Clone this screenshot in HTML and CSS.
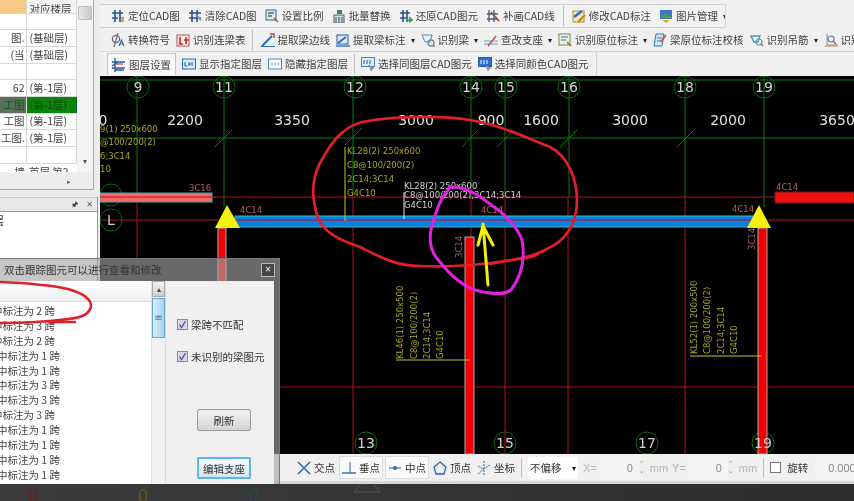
FILE: index.html
```html
<!DOCTYPE html>
<html lang="zh">
<head>
<meta charset="utf-8">
<title>CAD识别</title>
<link rel="stylesheet" href="styles.css">
</head>
<body>
<svg class="defs" width="0" height="0">
  <symbol id="i-locate" viewBox="0 0 14 14"><path d="M4 1v12M9 1v12M1 4h11M1 9h6" stroke="#26508c" stroke-width="1.6" fill="none"/><path d="M10 8h3v5h-3z" fill="#e0a820"/></symbol>
  <symbol id="i-clear" viewBox="0 0 14 14"><path d="M4 1v12M9 1v12M1 4h12M1 9h12" stroke="#26508c" stroke-width="1.6" fill="none"/><path d="M8 6l5 5" stroke="#7a90b0" stroke-width="2"/></symbol>
  <symbol id="i-scale" viewBox="0 0 14 14"><rect x="1" y="1" width="10" height="10" fill="#dfe8f2" stroke="#33668c"/><path d="M3 4h6M3 7h4" stroke="#3c7a44" stroke-width="1.5"/><path d="M9 9l4 4" stroke="#b04030" stroke-width="1.5"/></symbol>
  <symbol id="i-batch" viewBox="0 0 14 14"><rect x="2" y="6" width="10" height="8" fill="#cfe0d8" stroke="#557"/><path d="M4 8v5M7 8v5M10 8v5" stroke="#447"/><path d="M5 1h5v4H5z" fill="#2c8a50"/></symbol>
  <symbol id="i-restore" viewBox="0 0 14 14"><path d="M4 1v12M8 1v12M1 4h10M1 9h6" stroke="#26508c" stroke-width="1.6" fill="none"/><path d="M7 11h6M10 8l3 3-3 2" stroke="#2c9a40" stroke-width="1.6" fill="none"/></symbol>
  <symbol id="i-draw" viewBox="0 0 14 14"><path d="M3 1v12M8 1v12M1 5h11M1 10h11" stroke="#46608c" stroke-width="1.4" fill="none"/><path d="M5 3l8 9" stroke="#a04a30" stroke-width="1.6"/></symbol>
  <symbol id="i-edit" viewBox="0 0 14 14"><rect x="1" y="2" width="11" height="11" fill="#f4e8b8" stroke="#b09030"/><path d="M2 8l8-6" stroke="#2a70c0" stroke-width="2.4"/><path d="M6 13l7-7" stroke="#d08020" stroke-width="2"/></symbol>
  <symbol id="i-pic" viewBox="0 0 14 14"><rect x="1" y="1" width="12" height="9" fill="#3a7ac8"/><path d="M2 9l4-5 3 3 2-1 2 3z" fill="#5aa040"/><path d="M3 11h8l-4 3z" fill="#e0b020"/></symbol>
  <symbol id="i-phi" viewBox="0 0 14 14"><path d="M7 0L3 14" stroke="#667" stroke-width="1.2"/><ellipse cx="5" cy="6" rx="3.6" ry="3.6" fill="none" stroke="#667" stroke-width="1.2"/><path d="M8 13l2.500-6 2.500 6M9 11h3" stroke="#2a6ac0" stroke-width="1.2" fill="none"/></symbol>
  <symbol id="i-lian" viewBox="0 0 14 14"><rect x="1" y="2" width="12" height="11" fill="#fbeee8" stroke="#c0504a"/><path d="M4 4v7h3M10 4v7M8 7h5" stroke="#c02a2a" stroke-width="1.6" fill="none"/></symbol>
  <symbol id="i-edge" viewBox="0 0 14 14"><path d="M1 13L11 3" stroke="#2a70c0" stroke-width="2"/><path d="M9 1h4v4" stroke="#c04030" stroke-width="1.4" fill="none"/><path d="M0 13.500h14" stroke="#2a70c0"/></symbol>
  <symbol id="i-note" viewBox="0 0 14 14"><rect x="1" y="2" width="11" height="9" fill="#dcebfa" stroke="#2a5a9c"/><path d="M2 10l8-6" stroke="#2a70c0" stroke-width="2"/><path d="M0 13h14" stroke="#2a70c0" stroke-width="1.4"/></symbol>
  <symbol id="i-beam" viewBox="0 0 14 14"><path d="M1 2h10l-2 7H4z" fill="#e8f2fb" stroke="#5a86b0"/><circle cx="10" cy="10" r="3" fill="none" stroke="#6a8aa8" stroke-width="1.300"/><path d="M12 12l2 2" stroke="#a86030" stroke-width="1.400"/></symbol>
  <symbol id="i-support" viewBox="0 0 14 14"><path d="M0 8h14M0 11h14" stroke="#5aa0d8" stroke-width="1.200"/><path d="M4 13L12 3" stroke="#c04a30" stroke-width="1.300"/></symbol>
  <symbol id="i-origin" viewBox="0 0 14 14"><rect x="1" y="1" width="11" height="11" fill="#eef4e4" stroke="#6a8a4a"/><path d="M3 4h7M3 7h5" stroke="#3a6ab0" stroke-width="1.200"/><path d="M9 9l4 4" stroke="#a86030" stroke-width="1.500"/></symbol>
  <symbol id="i-check" viewBox="0 0 14 14"><path d="M3 1h8l-2 12H1z" fill="#d0e4f8" stroke="#3a74b8"/><path d="M4 5h5M4 8h4" stroke="#3a74b8"/><path d="M8 9l5-7" stroke="#d04a30" stroke-width="1.500"/></symbol>
  <symbol id="i-hang" viewBox="0 0 14 14"><path d="M1 3h9l-2 6H4z" fill="none" stroke="#3a9ac0" stroke-width="1.300"/><circle cx="9" cy="9" r="3" fill="none" stroke="#6a90a8" stroke-width="1.200"/><path d="M11 11l2 2" stroke="#a86030" stroke-width="1.300"/></symbol>
  <symbol id="i-id" viewBox="0 0 14 14"><path d="M3 1v11h11" stroke="#7a8a9a" fill="none"/><circle cx="7" cy="6" r="3" fill="none" stroke="#5a7a9a" stroke-width="1.200"/><path d="M9 8l3 3" stroke="#a86030" stroke-width="1.300"/><path d="M1 13h13" stroke="#c89050" stroke-width="1.200"/></symbol>
  <symbol id="i-layer" viewBox="0 0 14 14"><path d="M3 0v14M0 4h13M0 8l6-4M0 10h13M3 12h9" stroke="#2a5a9c" stroke-width="1.400" fill="none"/><path d="M4 6h7" stroke="#c04a60" stroke-width="1.300"/></symbol>
  <symbol id="i-cad" viewBox="0 0 14 14"><rect x=".5" y="2" width="13" height="10" fill="#dcebfa" stroke="#2a6ab0"/><path d="M3 5v4h2M7 9V5M7 7h2M10 5v4" stroke="#2a5a9c" fill="none"/></symbol>
  <symbol id="i-cadh" viewBox="0 0 14 14"><rect x=".5" y="2" width="13" height="10" fill="#f4f8fc" stroke="#4a86c0"/><path d="M3 7h8" stroke="#6a96c0" stroke-dasharray="2 1"/></symbol>
  <symbol id="i-sel" viewBox="0 0 14 14"><rect x=".5" y="0.500" width="13" height="9" fill="#dcebfa" stroke="#4a86c0"/><path d="M3 3v4M6 3v4M9 3v4" stroke="#2a5a9c"/><path d="M8 8l2 6 1-2 2-1z" fill="#99a" stroke="#667" stroke-width=".5"/></symbol>
  <symbol id="i-sel2" viewBox="0 0 14 14"><rect x=".5" y="0.500" width="13" height="9" fill="#2a70d0" stroke="#2a5a9c"/><path d="M3 3v4M6 3v4M9 3v4" stroke="#fff"/><path d="M8 8l2 6 1-2 2-1z" fill="#99a" stroke="#667" stroke-width=".5"/></symbol>
  <symbol id="i-x" viewBox="0 0 14 14"><path d="M1 1l12 12M13 1L1 13" stroke="#2a6ab0" stroke-width="1.500"/></symbol>
  <symbol id="i-perp" viewBox="0 0 14 14"><path d="M0 12h14" stroke="#2a6ab0" stroke-width="1.400"/><path d="M8 1v11" stroke="#2a6ab0"/></symbol>
  <symbol id="i-mid" viewBox="0 0 14 14"><path d="M1 7h12" stroke="#2a6ab0"/><circle cx="7" cy="7" r="2" fill="#2a6ab0"/></symbol>
  <symbol id="i-vertex" viewBox="0 0 14 14"><path d="M7 1l6 5-2 7H3L1 6z" fill="none" stroke="#2a6ab0" stroke-width="1.300"/></symbol>
  <symbol id="i-coord" viewBox="0 0 14 14"><path d="M7 0v14M1 5l5 3 7-4M1 13l6-5" stroke="#2a6ab0" stroke-dasharray="2 1" fill="none"/></symbol>
</svg>

<div class="app">
  <aside class="left">
    <div class="tree">
      <div class="tree-body">
        <table class="floors">
          <tr class="r-head"><td class="orange"></td><td>对应楼层</td></tr>
          <tr><td></td><td></td></tr>
          <tr><td>图.</td><td>(基础层)</td></tr>
          <tr><td>(当</td><td>(基础层)</td></tr>
          <tr><td></td><td></td></tr>
          <tr><td>62</td><td>(第-1层)</td></tr>
          <tr class="sel"><td>工图</td><td>(第-1层)</td></tr>
          <tr><td>工图</td><td>(第-1层)</td></tr>
          <tr><td>工图.</td><td>(第-1层)</td></tr>
          <tr><td></td><td></td></tr>
          <tr class="r-cut"><td>墙</td><td>首层 第2</td></tr>
        </table>
        <div class="v-scroll"><span class="v-thumb"></span><span class="v-down">▾</span></div>
      </div>
      <div class="h-scroll"><span>▸</span></div>
    </div>
    <div class="props">
      <div class="props-head"><span class="pin">🖈</span><span class="props-x">✕</span></div>
      <div class="props-body">层</div>
    </div>
  </aside>

  <main class="work">
    <div class="bars">
      <div class="bar bar-one">
        <span class="tool"><svg class="ico"><use href="#i-locate"/></svg>定位CAD图</span>
        <span class="tool"><svg class="ico"><use href="#i-clear"/></svg>清除CAD图</span>
        <span class="tool"><svg class="ico"><use href="#i-scale"/></svg>设置比例</span>
        <span class="tool"><svg class="ico"><use href="#i-batch"/></svg>批量替换</span>
        <span class="tool"><svg class="ico"><use href="#i-restore"/></svg>还原CAD图元</span>
        <span class="tool"><svg class="ico"><use href="#i-draw"/></svg>补画CAD线</span>
        <span class="sep"></span>
        <span class="tool"><svg class="ico"><use href="#i-edit"/></svg>修改CAD标注</span>
        <span class="tool"><svg class="ico"><use href="#i-pic"/></svg>图片管理<b class="caret">▾</b></span>
      </div>
      <div class="bar bar-two">
        <span class="tool"><svg class="ico"><use href="#i-phi"/></svg>转换符号</span>
        <span class="tool"><svg class="ico"><use href="#i-lian"/></svg>识别连梁表</span>
        <span class="sep"></span>
        <span class="tool"><svg class="ico"><use href="#i-edge"/></svg>提取梁边线</span>
        <span class="tool"><svg class="ico"><use href="#i-note"/></svg>提取梁标注<b class="caret">▾</b></span>
        <span class="tool"><svg class="ico"><use href="#i-beam"/></svg>识别梁<b class="caret">▾</b></span>
        <span class="tool"><svg class="ico"><use href="#i-support"/></svg>查改支座<b class="caret">▾</b></span>
        <span class="tool"><svg class="ico"><use href="#i-origin"/></svg>识别原位标注<b class="caret">▾</b></span>
        <span class="tool"><svg class="ico"><use href="#i-check"/></svg>梁原位标注校核</span>
        <span class="tool"><svg class="ico"><use href="#i-hang"/></svg>识别吊筋<b class="caret">▾</b></span>
        <span class="tool"><svg class="ico"><use href="#i-id"/></svg>识别</span>
      </div>
      <div class="bar bar-three">
        <span class="tool active"><svg class="ico"><use href="#i-layer"/></svg>图层设置</span>
        <span class="tool"><svg class="ico"><use href="#i-cad"/></svg>显示指定图层</span>
        <span class="tool"><svg class="ico"><use href="#i-cadh"/></svg>隐藏指定图层</span>
        <span class="sep"></span>
        <span class="tool"><svg class="ico"><use href="#i-sel"/></svg>选择同图层CAD图元</span>
        <span class="tool"><svg class="ico"><use href="#i-sel2"/></svg>选择同颜色CAD图元</span>
      </div>
    </div>

    <svg class="cad" viewBox="100 76 754 378" width="754" height="378">
      <g class="ln-green">
        <path d="M100 80H854M100 138H854"/>
        <path d="M137 76V197M224 76V207M353 76V197M471 76V197M505 76V197M569 76V197M685 76V197M764 76V207"/>
        <path d="M215 147L232 130M345 145L362 128M462 147L478 130M497 147L514 130M560 147L577 130M677 147L694 130"/>
      </g>
      <g class="ln-red">
        <path d="M100 197H854M100 220H854M280 387H854"/>
        <path d="M137 197V258M353 197V454M471 197V237M505 197V454M568 197V454M685 197V454"/>
      </g>
      <g class="circles">
        <circle cx="138" cy="87" r="11"/><circle cx="224" cy="87" r="11"/><circle cx="355" cy="87" r="11"/><circle cx="471" cy="87" r="11"/><circle cx="506" cy="87" r="11"/><circle cx="569" cy="87" r="11"/><circle cx="685" cy="87" r="11"/><circle cx="764" cy="87" r="11"/>
        <circle cx="111" cy="195" r="11"/><circle cx="111" cy="220" r="11"/>
        <circle cx="366" cy="443" r="11"/><circle cx="505" cy="443" r="11"/><circle cx="647" cy="443" r="11"/><circle cx="763" cy="443" r="11"/>
      </g>
      <!-- beams -->
      <rect class="b-salmon" x="100" y="193" width="112" height="9"/>
      <rect class="b-red" x="775" y="192" width="79" height="11"/>
      <path class="ln-red" d="M100 197H212"/>
      <rect class="b-blue" x="235" y="216" width="525" height="11"/>
      <path class="ln-red" d="M235 220H760"/>
      <!-- columns -->
      <rect class="col" x="218" y="228" width="8" height="226"/>
      <rect class="col" x="465" y="237" width="9" height="217"/>
      <rect class="col" x="758" y="228" width="9" height="226"/>
      <path class="tri" d="M227 205L240 228H215Z"/>
      <path class="tri" d="M759 205L771 228H747Z"/>
      <!-- axis numbers -->
      <g class="axis">
        <text x="138" y="92">9</text><text x="224" y="92">11</text><text x="355" y="92">12</text><text x="471" y="92">14</text><text x="506" y="92">15</text><text x="569" y="92">16</text><text x="685" y="92">18</text><text x="764" y="92">19</text>
        <text x="111" y="225">L</text>
        <text x="366" y="448">13</text><text x="505" y="448">15</text><text x="647" y="448">17</text><text x="763" y="448">19</text>
      </g>
      <g class="dims">
        <text x="103" y="125">0</text><text x="185" y="125">2200</text><text x="292" y="125">3350</text><text x="416" y="125">3000</text><text x="491" y="125">900</text><text x="541" y="125">1600</text><text x="630" y="125">3000</text><text x="728" y="125">2000</text><text x="837" y="125">3650</text>
      </g>
      <g class="note">
        <text x="100" y="132">9(1) 250x600</text><text x="100" y="145">@100/200(2)</text><text x="100" y="159">6;3C14</text><text x="100" y="172">10</text>
        <text x="347" y="154">KL28(2) 250x600</text><text x="347" y="168">C8@100/200(2)</text><text x="347" y="182">2C14;3C14</text><text x="347" y="196">G4C10</text>
        <text transform="translate(403 359) rotate(-90)">KL46(1) 250x500</text>
        <text transform="translate(417 359) rotate(-90)">C8@100/200(2)</text>
        <text transform="translate(430 359) rotate(-90)">2C14;3C14</text>
        <text transform="translate(443 359) rotate(-90)">G4C10</text>
        <text transform="translate(697 354) rotate(-90)">KL52(1) 200x500</text>
        <text transform="translate(710 354) rotate(-90)">C8@100/200(2)</text>
        <text transform="translate(724 354) rotate(-90)">2C14;3C14</text>
        <text transform="translate(737 354) rotate(-90)">G4C10</text>
      </g>
      <path class="ln-yellow" d="M345 147V221M396 360H470M690 356H762"/>
      <path class="ln-white" d="M404 192V219"/>
      <g class="note note-white">
        <text x="404" y="189">KL28(2) 250x600</text><text x="404" y="198">C8@100/200(2);3C14;3C14</text><text x="404" y="208">G4C10</text>
      </g>
      <g class="note note-pink">
        <text x="189" y="191">3C16</text><text x="240" y="213">4C14</text><text x="481" y="213">4C14</text><text x="732" y="212">4C14</text><text x="776" y="190">4C14</text>
        <text transform="translate(462 258) rotate(-90)">3C14</text><text transform="translate(755 250) rotate(-90)">3C14</text>
      </g>
      <!-- hand drawn marks -->
      <path class="mark-red" d="M538 254C530 259 522 258 505 261C480 265 450 267 420 266C395 266 378 256 360 247C340 240 325 234 318 218C312 200 311 180 320 163C330 145 340 128 362 122C395 116 440 115 470 120C500 125 525 137 550 147C568 156 577 180 577 200C577 222 568 240 545 250C530 258 510 260 490 264"/>
      <path class="mark-pink" d="M449 187C465 186 478 195 490 204C505 214 518 228 522 240C526 262 520 278 511 290C505 295 490 294 475 290C460 285 448 272 440 262C430 252 428 240 432 225C437 210 440 198 449 189"/>
      <path class="mark-yellow" d="M488 285L483 224M478 245L483 226L493 245"/>
    </svg>

    <div class="status">
      <span class="snap"><svg class="ico"><use href="#i-x"/></svg>交点</span>
      <span class="snap pressed"><svg class="ico"><use href="#i-perp"/></svg>垂点</span>
      <span class="snap pressed"><svg class="ico"><use href="#i-mid"/></svg>中点</span>
      <span class="snap"><svg class="ico"><use href="#i-vertex"/></svg>顶点</span>
      <span class="snap"><svg class="ico"><use href="#i-coord"/></svg>坐标</span>
      <span class="sep sep-status"></span>
      <span class="combo">不偏移<b class="caret">▾</b></span>
      <span class="dim dim-x">X=</span>
      <span class="num">0</span><span class="spin">⌃<br>⌄</span>
      <span class="dim">mm</span><span class="dim">Y=</span>
      <span class="num">0</span><span class="spin">⌃<br>⌄</span>
      <span class="dim">mm</span>
      <span class="sep sep-status"></span>
      <span class="box"></span><span class="rot">旋转</span>
      <span class="num num-rot">0.000</span>
    </div>
  </main>

  <div class="strip"><span class="s-r">0</span><span class="s-y">0</span><span class="s-b">0</span>
    <svg class="s-tri" width="28" height="10" viewBox="0 0 28 10"><path d="M14 -8L27 8H1Z"/></svg>
  </div>

  <section class="dialog">
    <header class="dlg-title">双击跟踪图元可以进行查看和修改<span class="dlg-close">✕</span></header>
    <div class="dlg-body">
      <div class="list">
        <div class="list-head"></div>
        <div class="rows">
          <div class="row cut">中标注为 2 跨</div>
          <div class="row cut">中标注为 3 跨</div>
          <div class="row cut">中标注为 2 跨</div>
          <div class="row">中标注为 1 跨</div>
          <div class="row">中标注为 1 跨</div>
          <div class="row">中标注为 3 跨</div>
          <div class="row">中标注为 3 跨</div>
          <div class="row cut">中标注为 3 跨</div>
          <div class="row">中标注为 1 跨</div>
          <div class="row">中标注为 1 跨</div>
          <div class="row">中标注为 1 跨</div>
          <div class="row">中标注为 1 跨</div>
        </div>
      </div>
      <div class="d-scroll"><span class="d-up">▴</span><span class="d-thumb">≡</span></div>
      <div class="side">
        <label class="chk"><svg class="cbox" viewBox="0 0 11 11"><rect x=".5" y=".5" width="10" height="10"/><path d="M2.500 5.500L4.500 8.500L8.500 2"/></svg>梁跨不匹配</label>
        <label class="chk"><svg class="cbox" viewBox="0 0 11 11"><rect x=".5" y=".5" width="10" height="10"/><path d="M2.500 5.500L4.500 8.500L8.500 2"/></svg>未识别的梁图元</label>
        <button class="btn btn-refresh">刷新</button>
        <button class="btn btn-primary">编辑支座</button>
      </div>
    </div>
    <svg class="dlg-mark" width="100" height="50" viewBox="0 0 100 50"><path d="M0 0C25 1 50 3 68 7C82 11 91 17 91 24C90 32 80 36 68 37C45 40 20 41 0 41M50 40H75"/></svg>
  </section>
</div>
</body>
</html>
```

FILE: styles.css
```css
* { box-sizing: border-box; }
html, body { margin: 0; padding: 0; }
body {
  width: 854px;
  height: 501px;
  overflow: hidden;
  background: #3a3a3a;
  font-family: "Noto Sans CJK SC", "Liberation Sans", sans-serif;
  font-size: 10.5px;
  color: #333;
}
.defs { position: absolute; }

.app {
  position: relative;
  display: grid;
  grid-template-columns: 100px 754px;
  grid-template-rows: 484px 17px;
  width: 854px;
  height: 501px;
  overflow: hidden;
  filter: blur(0.35px);
}

/* left docks */
.left {
  display: flex;
  flex-direction: column;
  gap: 7px;
  background: #ececec;
  overflow: hidden;
}
.tree {
  height: 190px;
  width: 94px;
  flex: none;
  background: #f0f0f0;
  border-right: 1px solid #a8a8a8;
  border-bottom: 1px solid #a8a8a8;
  display: flex;
  flex-direction: column;
}
.tree-body { display: flex; height: 172px; overflow: hidden; background: #fff; }
.floors {
  width: 76px;
  flex: none;
  table-layout: fixed;
  border-collapse: collapse;
  font-size: 10.500px;
  align-self: flex-start;
}
.floors td {
  height: 16.700px;
  padding: 0 1px;
  border-bottom: 1px solid #d8d8d8;
  border-right: 1px solid #d8d8d8;
  white-space: nowrap;
  overflow: hidden;
  line-height: 14px;
  color: #444;
}
.floors td:first-child { width: 26px; text-align: right; }
.floors td:last-child { width: 50px; padding-left: 3px; }
.floors .r-head td { height: 13px; line-height: 9px; background: #f3f3f3; vertical-align: bottom; }
.floors .r-head .orange { background: #f6ca84; }
.floors .r-cut td { height: 9px; line-height: 16px; vertical-align: top; border: 0; }
.floors .sel td:first-child { background: #5c6f5c; color: #0d5a0d; }
.floors .sel td:last-child { background: #0a850a; color: #064f06; border-right: 1px solid #063; }
.v-scroll {
  width: 17px;
  flex: none;
  background: #f4f4f4;
  display: flex;
  flex-direction: column;
  align-items: center;
  justify-content: space-between;
  color: #555;
  font-size: 8px;
}
.v-thumb {
  width: 14px;
  height: 14px;
  margin-top: 6px;
  background: linear-gradient(90deg, #e8e8e8, #c8c8c8);
  border: 1px solid #bbb;
  border-radius: 2px;
}
.v-down { margin-bottom: 6px; }
.h-scroll {
  flex: 1;
  background: #eee;
  display: flex;
  justify-content: flex-end;
  align-items: center;
  padding-right: 22px;
  font-size: 7px;
  color: #666;
}
.props { flex: 1; width: 98px; border-right: 1px solid #999; background: #fff; }
.props-head {
  height: 15px;
  background: #e8e8e8;
  border-bottom: 1px solid #999;
  border-top: 1px solid #c8c8c8;
  display: flex;
  justify-content: flex-end;
  align-items: center;
  gap: 8px;
  padding-right: 4px;
  font-size: 8px;
  line-height: 1;
  color: #555;
  font-family: "DejaVu Sans", sans-serif;
}
.pin { color: #333; }
.props-body { margin-left: -7px; font-size: 11px; line-height: 14px; padding-top: 1px; }

/* toolbars */
.work { display: flex; flex-direction: column; min-width: 0; background: #f0f0f0; }
.bars { height: 76px; flex: none; background: #f0f0f0; padding-top: 4px; display: flex; flex-direction: column; }
.bar {
  height: 24px;
  flex: none;
  display: flex;
  align-items: center;
  gap: 6px;
  padding-left: 11px;
  white-space: nowrap;
  border-bottom: 1px solid #d4d4d4;
  position: relative;
  overflow: hidden;
}
.bar-one { width: 626px; gap: 8px; border: 1px solid #d0d0d0; border-left: 0; border-radius: 0 0 2px 0; background: #f2f2f2; }
.bar-two .sep { margin-right: 2px; }
.bar-three { width: 497px; padding-left: 7px; height: 24px; border-right: 1px solid #d0d0d0; border-bottom: 0; }
.tool { display: inline-flex; align-items: center; gap: 3px; line-height: 14px; color: #404040; flex: none; }
.tool.active { padding: 2px 4px; background: #f8f8f8; border: 1px solid #c8c8c8; border-bottom: 0; height: 22px; margin-right: 0; }
.ico { width: 14px; height: 14px; flex: none; }
.caret { font-weight: normal; font-size: 8px; margin-left: 2px; color: #222; }
.sep { width: 1px; height: 20px; background: #bcbcbc; flex: none; }

/* drawing */
.cad { display: block; flex: none; background: #000; }
.cad text { font-family: "DejaVu Sans", sans-serif; }
.ln-green { stroke: #0c7a0c; stroke-width: 1; fill: none; }
.ln-red { stroke: #b5101e; stroke-width: 1; fill: none; }
.ln-yellow { stroke: #c4c430; stroke-width: 1; fill: none; }
.ln-white { stroke: #e8e8e8; stroke-width: 1; fill: none; }
.circles circle { fill: none; stroke: #0c6a0c; stroke-width: 1; }
.b-salmon { fill: #f36a66; stroke: #35b0b0; }
.b-red { fill: #f01010; stroke: #602020; }
.b-blue { fill: #0f7ee0; stroke: #30c0c0; }
.col { fill: #f00000; stroke: #a8b0b0; stroke-width: 1; }
.tri { fill: #f6f010; }
.axis text { fill: #d0d0d0; font-size: 14px; text-anchor: middle; }
.dims text { fill: #e0e0e0; font-size: 14px; text-anchor: middle; }
.note text { fill: #a5a520; font-size: 8.500px; }
.note-white text { fill: #d0d0d0; }
.note-pink text { fill: #b06060; }
.mark-red { fill: none; stroke: #e01f2a; stroke-width: 2.700; stroke-linecap: round; stroke-linejoin: round; }
.mark-pink { fill: none; stroke: #e022e0; stroke-width: 3; stroke-linecap: round; stroke-linejoin: round; }
.mark-yellow { fill: none; stroke: #f5f000; stroke-width: 3; stroke-linecap: round; stroke-linejoin: round; }

/* status */
.status {
  flex: 1;
  display: flex;
  align-items: center;
  padding-left: 195px;
  background: #f0f0f0;
  border-bottom: 3px solid #d6d6d6;
  white-space: nowrap;
  font-size: 10.500px;
  color: #333;
  overflow: hidden;
}
.snap { display: inline-flex; align-items: center; gap: 3px; height: 23px; padding: 0 2px; flex: none; }
.snap.pressed { background: #fafafa; border: 1px solid #ddd; }
.snap + .snap { margin-left: 2px; }
.sep-status { margin: 0 6px 0 4px; }
.combo { width: 50px; height: 22px; background: #fff; display: flex; align-items: center; justify-content: space-between; padding: 0 2px 0 2px; flex: none; }
.dim { color: #b4b4b4; font-family: "Liberation Sans", sans-serif; font-size: 11px; padding: 0 2px; flex: none; }
.dim-x { margin-left: 3px; }
.num { width: 40px; text-align: right; color: #888; font-family: "Liberation Sans", sans-serif; font-size: 11px; padding-right: 6px; height: 22px; line-height: 22px; background: #f4f4f4; flex: none; }
.spin { font-size: 7px; line-height: 7px; color: #999; width: 9px; flex: none; font-family: "DejaVu Sans", sans-serif; }
.box { width: 11px; height: 11px; background: #fff; border: 1px solid #777; flex: none; }
.rot { margin-left: 6px; flex: none; }
.num-rot { width: 40px; flex: none; margin-left: 7px; text-align: left; padding: 0 0 0 13px; }

/* bottom strip */
.strip {
  grid-column: 1 / span 2;
  background: linear-gradient(90deg, #3c3c3c, #333 60%, #2d2d2d);
  display: flex;
  position: relative;
  padding-left: 28px;
  gap: 100px;
  font-family: "Liberation Sans", sans-serif;
  font-size: 18px;
  line-height: 24px;
  overflow: hidden;
}
.s-r { color: #6a2222; }
.s-y { color: #5e5626; }
.s-b { color: #1e4a60; }
.s-tri { position: absolute; left: 353px; top: 0; }
.s-tri path { fill: none; stroke: #555; }

/* dialog window */
.dialog {
  position: absolute;
  left: 0;
  top: 258px;
  width: 280px;
  height: 226px;
  background: rgba(165, 165, 165, 0.64);
  border: 1px solid #777;
  border-left: 0;
  border-bottom: 0;
  padding: 0 5px 0 0;
  display: flex;
  flex-direction: column;
}
.dlg-title {
  height: 22px;
  flex: none;
  padding-left: 4px;
  font-size: 10.500px;
  line-height: 21px;
  color: #333;
  position: relative;
}
.dlg-close {
  position: absolute;
  right: -1px;
  top: 4px;
  width: 14px;
  height: 14px;
  background: #444;
  border: 1px solid #bbb;
  color: #eee;
  font-family: "DejaVu Sans", sans-serif;
  font-size: 8px;
  line-height: 12px;
  text-align: center;
}
.dlg-body { flex: 1; min-height: 0; display: flex; background: #f0f0f0; overflow: hidden; }
.list { width: 151px; flex: none; background: #fff; overflow: hidden; }
.list-head { height: 21px; background: linear-gradient(#fff, #eef0f2); border-bottom: 1px solid #dcdcdc; }
.rows { padding-top: 1px; }
.row { height: 14.900px; line-height: 15px; font-size: 10.500px; white-space: nowrap; margin-left: -3px; color: #444; }
.row.cut { margin-left: -8px; }
.d-scroll { width: 14px; flex: none; background: #f2f2f2; border-left: 1px solid #e0e0e0; display: flex; flex-direction: column; align-items: center; }
.d-up { width: 13px; height: 16px; background: linear-gradient(#f4f4f4, #ccc); border: 1px solid #aaa; font-size: 8px; line-height: 13px; text-align: center; color: #444; }
.d-thumb { width: 13px; height: 40px; margin-top: 1px; background: linear-gradient(90deg, #d6ecfb, #a8d4f2); border: 1px solid #6aa4cc; color: #3a80b0; font-size: 10px; line-height: 38px; text-align: center; font-family: "DejaVu Sans", sans-serif; }
.side { flex: 1; position: relative; display: flex; flex-direction: column; padding: 36px 0 0 11px; border-left: 1px solid #ddd; }
.chk { display: flex; align-items: center; gap: 3px; height: 14px; margin-bottom: 18px; font-size: 10.500px; color: #333; white-space: nowrap; }
.cbox { width: 11px; height: 11px; flex: none; }
.cbox rect { fill: #d8d8e6; stroke: #8a8a9a; }
.cbox path { fill: none; stroke: #4c4ca8; stroke-width: 1.300; }
.btn {
  width: 54px;
  height: 22px;
  margin-left: 20px;
  padding: 0;
  font: inherit;
  font-size: 10.500px;
  color: #333;
  background: linear-gradient(#f4f4f4, #d4d4d4);
  border: 1px solid #9a9a9a;
  border-radius: 2px;
}
.btn-refresh { margin-top: 28px; }
.btn-primary { margin-top: 26px; border: 2px solid #58b8e8; background: linear-gradient(#f6fafc, #d8e4ec); }
.dlg-mark { position: absolute; left: 0; top: 23px; overflow: visible; }
.dlg-mark path { fill: none; stroke: #e01f2a; stroke-width: 2.500; stroke-linecap: round; }
```
